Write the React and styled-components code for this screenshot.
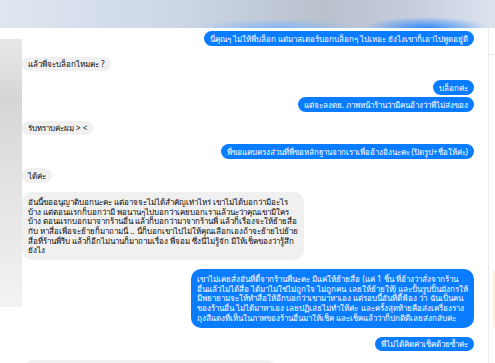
import React from "react";
import styled, { createGlobalStyle } from "styled-components";

const Global = createGlobalStyle`
  html, body { margin: 0; padding: 0; background: #ffffff; }
  body { width: 495px; height: 363px; overflow: hidden; font-family: "Noto Sans", "DejaVu Sans", sans-serif; }
  #root { width: 495px; height: 363px; }
`;

const Page = styled.div`
  width: 495px;
  height: 363px;
  display: flex;
  flex-direction: column;
  overflow: hidden;
  background: #ffffff;
`;

const Header = styled.div`
  flex: 0 0 28px;
  background:
    radial-gradient(ellipse 62px 11px at 86% 100%, rgba(40, 135, 255, 0.95), rgba(40, 135, 255, 0) 100%),
    radial-gradient(ellipse 80px 9px at 56% 100%, rgba(120, 180, 255, 0.85), rgba(120, 180, 255, 0) 100%),
    linear-gradient(to right, #dfe6f0 0%, #cdd7e7 35%, #b9c1cd 65%, #c3cbdc 82%, #dce3ee 100%);
`;

const Body = styled.div`
  flex: 1;
  display: flex;
  min-height: 0;
`;

const SideStrip = styled.div`
  flex: 0 0 22px;
  margin-top: 11px;
  height: 268px;
  background: linear-gradient(to bottom, #e8e7e7 0%, #d8d5d5 22%, #e4e2e2 55%, #f3f3f3 100%);
`;

const Chat = styled.div`
  flex: 1;
  display: flex;
  flex-direction: column;
  gap: 9px;
  padding: 3px 14px 0 0;
  min-width: 0;
`;

const Group = styled.div`
  display: flex;
  flex-direction: column;
  gap: 2px;
  margin-top: ${(p) => p.$extra || 0}px;
`;

const Bubble = styled.div`
  align-self: ${(p) => (p.$me ? "flex-end" : "flex-start")};
  background: ${(p) => (p.$me ? "#0a7cff" : "#f0f0f0")};
  color: ${(p) => (p.$me ? "#ffffff" : "#080808")};
  font-size: 8px;
  line-height: 9.7px;
  padding: 2.6px 6px 2.4px;
  border-radius: 8px;
  white-space: nowrap;
  ${(p) => (p.$big ? "padding: 5px 6px 5px; border-radius: 10px;" : "")}
`;

const PeekBubble = styled.div`
  align-self: flex-start;
  margin-left: 3px;
  width: 250px;
  height: 15px;
  flex: 0 0 15px;
  border-radius: 8px;
  background: #f0f0f0;
`;

const RightRail = styled.div`
  flex: 0 0 6px;
  border-left: 1px solid #ececec;
  display: flex;
  flex-direction: column;
`;

const RailTop = styled.div`
  height: 26px;
  border-bottom: 1px solid #ececec;
`;

const RailNote = styled.div`
  margin-top: 215px;
  margin-left: 4px;
  height: 57px;
  background: #fbf3dc;
`;

const bigLeft = [
  "อันนี้ขออนุญาติบอกนะคะ แต่อาจจะไม่ได้สำคัญเท่าไหร่ เขาไม่ได้บอกว่ามีอะไร",
  "บ้าง แต่ตอนแรกก็บอกว่ามี พอนานๆไปบอกว่าเคยบอกเราแล้วนะว่าคุณเขามีใคร",
  "บ้าง ตอนแรกบอกมาจากร้านอื่น แล้วก็บอกว่ามาจากร้านพี่ แล้วก็เรื่องจะให้ย้ายสื่อ",
  "กับ หาสื่อเพื่อจะย้ายก็มาถามนี่ .. นี่ก็บอกเขาไปไม่ให้คุณเลือกเองถ้าจะย้ายไปย้าย",
  "สื่อที่ร้านพี่รีบ แล้วก็อีกไม่นานก็มาถามเรื่อง พี่จอม ซึ่งนี่ไม่รู้จัก มีให้เช็คของว่ารู้สึก",
  "ยังไง",
];

const bigRight = [
  "เขาไม่เคยสั่งอันที่ดี้จากร้านพี่นะคะ มีแค่ให้ย้ายสื่อ (แค่ 1 ชิ้น ที่อ้างว่าสั่งจากร้าน",
  "อื่นแล้วไม่ได้สื่อ ได้มาไม่ใช่ไม่ถูกใจ ไม่ถูกคน เลยให้ย้ายให้) และปั้นรูปปั้นมังกรให้",
  "มีพยายามจะให้ทำสื่อให้อีกบอกว่าเขามาหาเอง แต่รอบนี้อันที่ดี้ฟ้อง ว่า ฉันเป็นคน",
  "ของร้านอื่น ไม่ได้มาหาเอง เลยปฏิเสธไม่ทำให้ค่ะ และครั้งสุดท้ายคือส่งเครื่องราง",
  "ถุงสีแดงที่เห็นในภาพของร้านอื่นมาให้เช็ค และเช็คแล้วว่าก็ปกติดีเลยส่งกลับค่ะ",
];

const Lines = ({ lines }) =>
  lines.map((l, i) => (
    <React.Fragment key={i}>
      {l}
      {i < lines.length - 1 && <br />}
    </React.Fragment>
  ));

export default function App() {
  return (
    <Page>
      <Global />
      <Header />
      <Body>
        <SideStrip />
        <Chat>
          <Bubble $me>นี่คุณๆ ไม่ให้พี่บล็อก แต่มาสเตอร์บอกบล็อกๆ ไปเหอะ ยังไงเขาก็เอาไปพูดอยู่ดี</Bubble>
          <Group $extra={2}>
            <Bubble>แล้วพี่จะบล็อกไหมคะ ?</Bubble>
          </Group>
          <Group>
            <Bubble $me>บล็อกค่ะ</Bubble>
            <Bubble $me>แต่จะลงดย. ภาพหน้าร้านว่ามีคนอ้างว่าพี่ไม่ส่งของ</Bubble>
          </Group>
          <Bubble>รับทราบค่ะผม &gt; &lt;</Bubble>
          <Bubble $me>พี่ขอแคบครงส่วนที่พี่ขอหลักฐานจากเราเพื่ออ้างอิงนะคะ (ปิดรูป+ชื่อให้ค่ะ)</Bubble>
          <Bubble>ได้ค่ะ</Bubble>
          <Bubble $big>
            <Lines lines={bigLeft} />
          </Bubble>
          <Bubble $me $big>
            <Lines lines={bigRight} />
          </Bubble>
          <Bubble $me>พี่ไม่ได้คิดค่าเช็คด้วยซ้ำค่ะ</Bubble>
          <PeekBubble />
        </Chat>
        <RightRail>
          <RailTop />
          <RailNote />
        </RightRail>
      </Body>
    </Page>
  );
}
